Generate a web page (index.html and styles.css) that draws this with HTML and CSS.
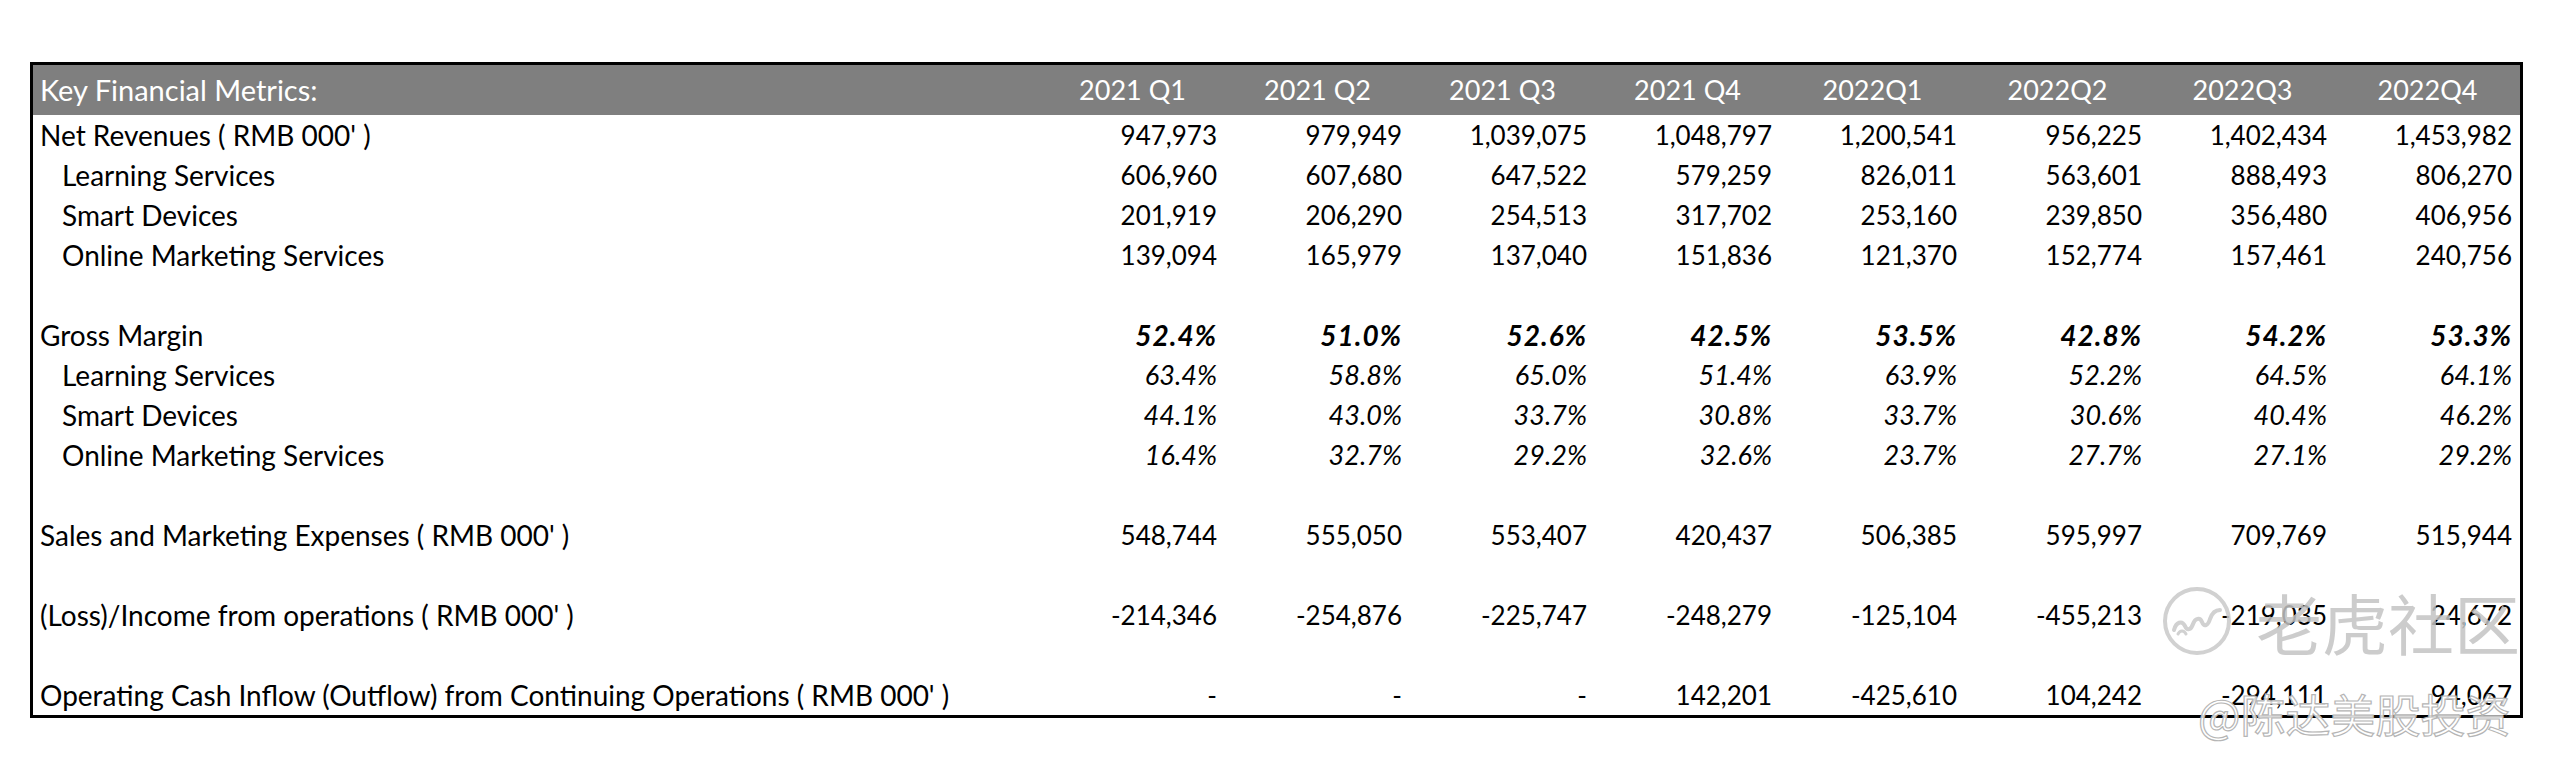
FILE: index.html
```html
<!DOCTYPE html>
<html lang="en">
<head>
<meta charset="utf-8">
<title>Key Financial Metrics</title>
<link rel="stylesheet" href="styles.css">
</head>
<body>
<div class="page">
  <table class="metrics">
    <colgroup>
      <col class="col-label">
      <col class="col-q"><col class="col-q"><col class="col-q"><col class="col-q">
      <col class="col-q"><col class="col-q"><col class="col-q"><col class="col-q">
    </colgroup>
    <thead>
      <tr class="head-row">
        <th class="label">Key Financial Metrics:</th>
        <th>2021 Q1</th><th>2021 Q2</th><th>2021 Q3</th><th>2021 Q4</th>
        <th>2022Q1</th><th>2022Q2</th><th>2022Q3</th><th>2022Q4</th>
      </tr>
    </thead>
    <tbody>
      <tr>
        <td class="label">Net Revenues ( RMB 000' )</td>
        <td>947,973</td><td>979,949</td><td>1,039,075</td><td>1,048,797</td>
        <td>1,200,541</td><td>956,225</td><td>1,402,434</td><td>1,453,982</td>
      </tr>
      <tr>
        <td class="label sub">Learning Services</td>
        <td>606,960</td><td>607,680</td><td>647,522</td><td>579,259</td>
        <td>826,011</td><td>563,601</td><td>888,493</td><td>806,270</td>
      </tr>
      <tr>
        <td class="label sub">Smart Devices</td>
        <td>201,919</td><td>206,290</td><td>254,513</td><td>317,702</td>
        <td>253,160</td><td>239,850</td><td>356,480</td><td>406,956</td>
      </tr>
      <tr>
        <td class="label sub">Online Marketing Services</td>
        <td>139,094</td><td>165,979</td><td>137,040</td><td>151,836</td>
        <td>121,370</td><td>152,774</td><td>157,461</td><td>240,756</td>
      </tr>
      <tr class="blank"><td colspan="9"></td></tr>
      <tr class="pct strong">
        <td class="label">Gross Margin</td>
        <td>52.4%</td><td>51.0%</td><td>52.6%</td><td>42.5%</td>
        <td>53.5%</td><td>42.8%</td><td>54.2%</td><td>53.3%</td>
      </tr>
      <tr class="pct">
        <td class="label sub">Learning Services</td>
        <td>63.4%</td><td>58.8%</td><td>65.0%</td><td>51.4%</td>
        <td>63.9%</td><td>52.2%</td><td>64.5%</td><td>64.1%</td>
      </tr>
      <tr class="pct">
        <td class="label sub">Smart Devices</td>
        <td>44.1%</td><td>43.0%</td><td>33.7%</td><td>30.8%</td>
        <td>33.7%</td><td>30.6%</td><td>40.4%</td><td>46.2%</td>
      </tr>
      <tr class="pct">
        <td class="label sub">Online Marketing Services</td>
        <td>16.4%</td><td>32.7%</td><td>29.2%</td><td>32.6%</td>
        <td>23.7%</td><td>27.7%</td><td>27.1%</td><td>29.2%</td>
      </tr>
      <tr class="blank"><td colspan="9"></td></tr>
      <tr>
        <td class="label">Sales and Marketing Expenses ( RMB 000' )</td>
        <td>548,744</td><td>555,050</td><td>553,407</td><td>420,437</td>
        <td>506,385</td><td>595,997</td><td>709,769</td><td>515,944</td>
      </tr>
      <tr class="blank"><td colspan="9"></td></tr>
      <tr>
        <td class="label">(Loss)/Income from operations ( RMB 000' )</td>
        <td>-214,346</td><td>-254,876</td><td>-225,747</td><td>-248,279</td>
        <td>-125,104</td><td>-455,213</td><td>-219,035</td><td>24,672</td>
      </tr>
      <tr class="blank"><td colspan="9"></td></tr>
      <tr>
        <td class="label">Operating Cash Inflow (Outflow) from Continuing Operations ( RMB 000' )</td>
        <td>-</td><td>-</td><td>-</td><td>142,201</td>
        <td>-425,610</td><td>104,242</td><td>-294,111</td><td>94,067</td>
      </tr>
    </tbody>
  </table>

  <div class="wm-brand">
    <svg class="wm-logo" viewBox="0 0 70 70" width="70" height="70" aria-hidden="true">
      <circle cx="35" cy="35" r="32" fill="none" stroke="#c9c9c9" stroke-width="4"/>
      <path d="M12 44 C14 36 20 34 23 40 C25 45 29 44 31 38 C33 32 38 31 40 36 C42 41 46 40 48 33 C50 27 54 24 58 24" fill="none" stroke="#c9c9c9" stroke-width="4" stroke-linecap="round"/>
      <path d="M16 48 C18 44 22 44 24 48" fill="none" stroke="#c9c9c9" stroke-width="3" stroke-linecap="round"/>
    </svg>
    <span class="wm-name">老虎社区</span>
  </div>
  <div class="wm-author">@陈达美股投资</div>
</div>
</body>
</html>
```

FILE: styles.css
```css
html, body {
  margin: 0;
  padding: 0;
  background: #ffffff;
}

body {
  font-family: Lato, "Liberation Sans", "Noto Sans CJK SC", sans-serif;
  color: #000000;
}

.page {
  position: relative;
  width: 2572px;
  height: 770px;
  padding-top: 62px;
  padding-left: 30px;
  box-sizing: border-box;
}

.metrics {
  width: 2493px;
  border: 3px solid #000000;
  border-collapse: separate;
  border-spacing: 0;
  table-layout: fixed;
  font-size: 26px;
}

.col-q {
  width: 185px;
}

.metrics th,
.metrics td {
  padding: 0 8px 0 0;
  white-space: nowrap;
  vertical-align: top;
}

.head-row th {
  height: 50px;
  line-height: 50px;
  background: #7f7f7f;
  color: #ffffff;
  font-size: 27px;
  font-weight: normal;
  text-align: center;
  padding: 0;
}

.metrics td {
  height: 40px;
  line-height: 40px;
  text-align: right;
  box-sizing: border-box;
}

.metrics .label {
  text-align: left;
  padding-left: 7px;
  padding-right: 0;
  font-size: 28px;
}

.metrics .label.sub {
  padding-left: 29px;
}

.head-row th.label {
  text-align: left;
  padding-left: 7px;
  font-size: 29px;
}

.pct td {
  font-style: italic;
  font-size: 27px;
}

.pct td.label {
  font-style: normal;
  font-size: 28px;
}

.pct.strong td {
  font-weight: bold;
  font-size: 28px;
  letter-spacing: 1px;
}

.pct.strong td.label {
  font-weight: normal;
  letter-spacing: 0;
}

.blank td {
  height: 40px;
}

.wm-brand {
  position: absolute;
  left: 2162px;
  top: 586px;
  display: flex;
  align-items: center;
  gap: 24px;
  opacity: 0.85;
}

.wm-logo {
  display: block;
}

.wm-name {
  font-family: "Noto Sans CJK SC", sans-serif;
  font-size: 66px;
  line-height: 70px;
  color: #c4c4c4;
}

.wm-author {
  position: absolute;
  left: 2198px;
  top: 684px;
  font-family: "Noto Sans CJK SC", sans-serif;
  font-size: 45px;
  line-height: 60px;
  color: rgba(255, 255, 255, 0.85);
  -webkit-text-stroke: 1.2px #b5b5b5;
}
```
